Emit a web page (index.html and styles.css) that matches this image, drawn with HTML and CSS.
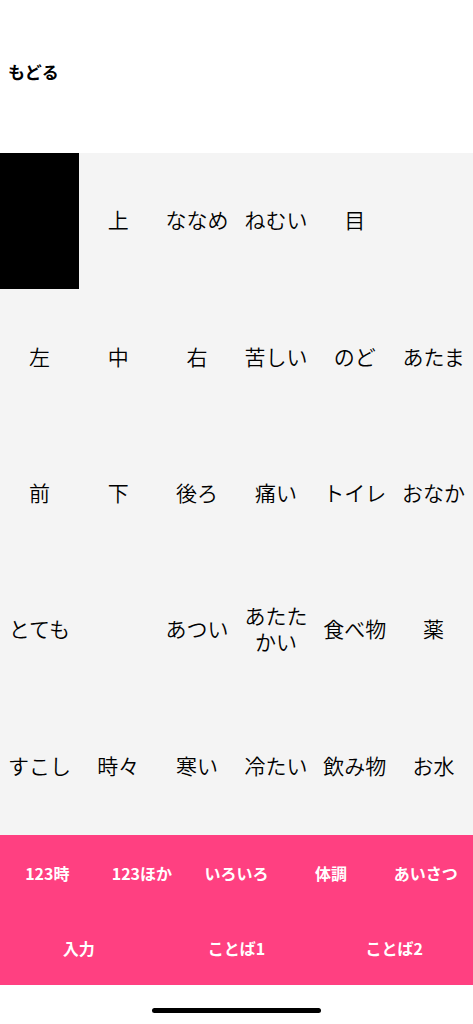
FILE: index.html
```html
<!DOCTYPE html>
<html lang="ja">
<head>
<meta charset="utf-8">
<link rel="stylesheet" href="styles.css">
</head>
<body>
<div class="app">
  <header class="header"><span class="back">もどる</span></header>
  <main class="grid">
    <div class="cell black"></div>
    <div class="cell">上</div>
    <div class="cell">ななめ</div>
    <div class="cell">ねむい</div>
    <div class="cell">目</div>
    <div class="cell"></div>

    <div class="cell">左</div>
    <div class="cell">中</div>
    <div class="cell">右</div>
    <div class="cell">苦しい</div>
    <div class="cell">のど</div>
    <div class="cell">あたま</div>

    <div class="cell">前</div>
    <div class="cell">下</div>
    <div class="cell">後ろ</div>
    <div class="cell">痛い</div>
    <div class="cell">トイレ</div>
    <div class="cell">おなか</div>

    <div class="cell">とても</div>
    <div class="cell"></div>
    <div class="cell">あつい</div>
    <div class="cell">あたたかい</div>
    <div class="cell">食べ物</div>
    <div class="cell">薬</div>

    <div class="cell">すこし</div>
    <div class="cell">時々</div>
    <div class="cell">寒い</div>
    <div class="cell">冷たい</div>
    <div class="cell">飲み物</div>
    <div class="cell">お水</div>
  </main>
  <nav class="tabs">
    <div class="tabrow five">
      <div class="tab">123時</div>
      <div class="tab">123ほか</div>
      <div class="tab">いろいろ</div>
      <div class="tab">体調</div>
      <div class="tab">あいさつ</div>
    </div>
    <div class="tabrow three">
      <div class="tab">入力</div>
      <div class="tab">ことば1</div>
      <div class="tab">ことば2</div>
    </div>
  </nav>
  <footer class="footer"><div class="home"></div></footer>
</div>
</body>
</html>
```

FILE: styles.css
```css
* { box-sizing: border-box; }
html, body {
  margin: 0;
  padding: 0;
  background: #ffffff;
}
body {
  font-family: "Noto Sans CJK JP", "Noto Sans", sans-serif;
  color: #000;
}
.app {
  width: 473px;
  height: 1024px;
  display: flex;
  flex-direction: column;
}
.header {
  height: 153px;
  display: flex;
  align-items: center;
  padding-left: 8px;
  padding-bottom: 10px;
}
.back {
  font-size: 17px;
  font-weight: 700;
}
.grid {
  height: 682px;
  background: #f4f4f4;
  display: grid;
  grid-template-columns: repeat(6, 1fr);
  grid-template-rows: repeat(5, 1fr);
}
.cell {
  display: flex;
  align-items: center;
  justify-content: center;
  text-align: center;
  font-size: 21px;
  font-weight: 350;
  line-height: 26px;
  padding: 0 1px 4px;
}
.cell.black {
  background: #000;
}
.tabs {
  height: 150px;
  background: #ff4081;
  display: flex;
  flex-direction: column;
}
.tabrow {
  flex: 1;
  display: grid;
}
.tabrow.five { grid-template-columns: repeat(5, 1fr); }
.tabrow.three { grid-template-columns: repeat(3, 1fr); }
.tab {
  display: flex;
  align-items: center;
  justify-content: center;
  color: #fff;
  font-weight: 700;
  font-size: 16px;
}
.footer {
  flex: 1;
  display: flex;
  justify-content: center;
  padding-top: 23px;
}
.home {
  width: 169px;
  height: 5px;
  border-radius: 3px;
  background: #000;
}
```
